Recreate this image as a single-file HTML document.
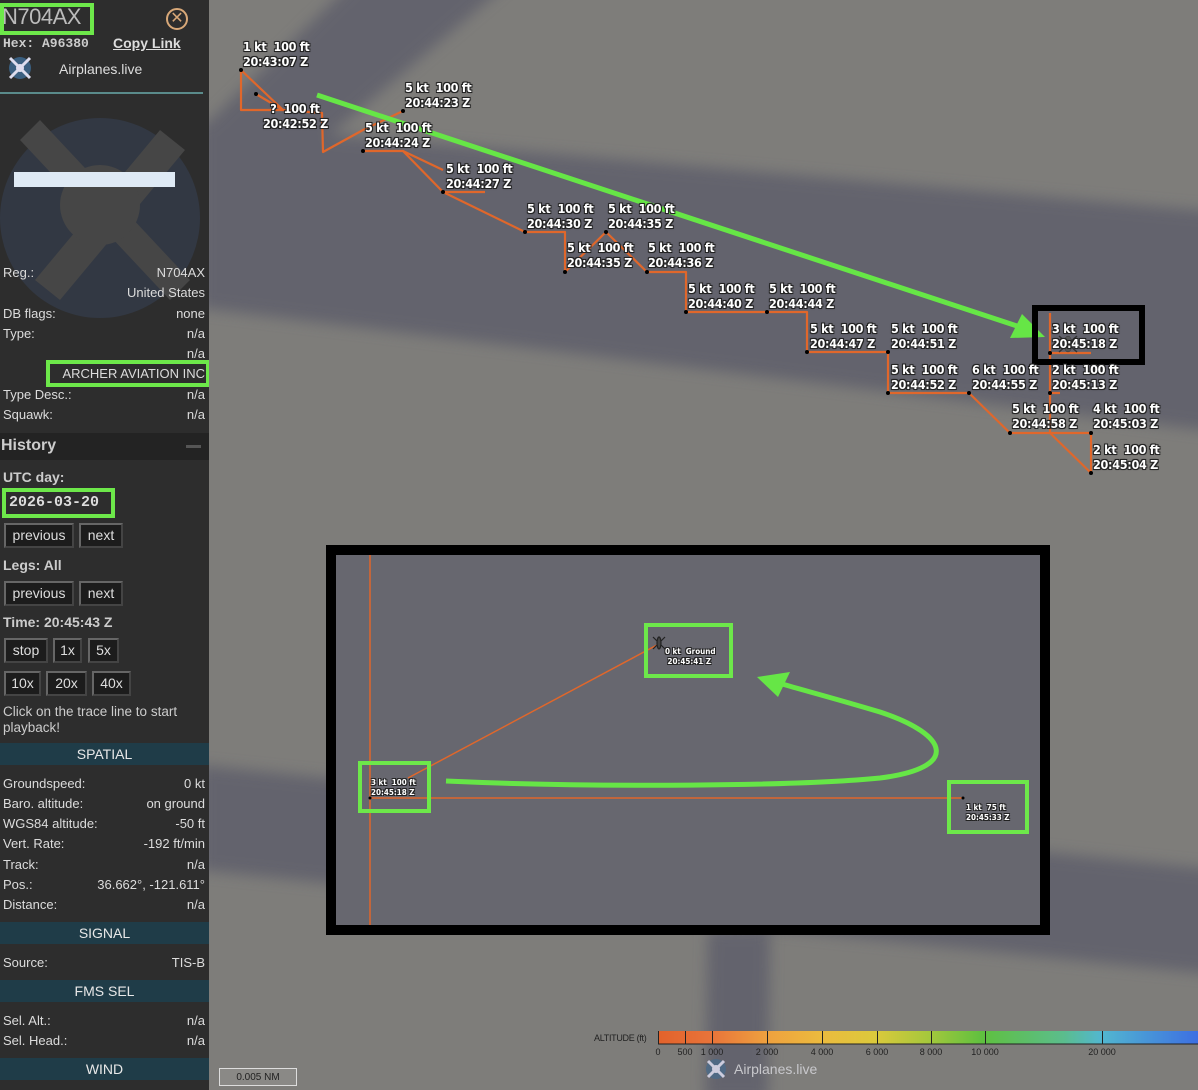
<!DOCTYPE html>
<html><head><meta charset="utf-8">
<style>
*{margin:0;padding:0;box-sizing:border-box}
body{width:1198px;height:1090px;overflow:hidden;position:relative;background:#7e7d7a;font-family:"Liberation Sans",sans-serif}
#sb{position:absolute;left:0;top:0;width:209px;height:1090px;background:#2d2d2d;color:#dcdcdc;font-size:13px;overflow:hidden}
.a{position:absolute;white-space:nowrap}
.r{position:absolute;left:3px;right:4px;height:16px;font-size:13px}
.r span{position:absolute;right:0;top:0}
.hd{position:absolute;left:0;width:209px;height:22px;background:#1f3c48;color:#e8e8e8;font-size:14px;text-align:center;line-height:22px}
.btn{position:absolute;height:25px;background:#1c1c1c;border:2px solid;border-color:#666 #444 #444 #666;color:#ddd;font-size:14px;text-align:center;line-height:21px}
.gb{position:absolute;border:4px solid #6de84a}
.lb{position:absolute;font:bold 12.5px/15px "DejaVu Sans Condensed","Liberation Sans",sans-serif;color:#fff;white-space:nowrap;text-shadow:-1px -1px 0 #222,1px -1px 0 #222,-1px 1px 0 #222,1px 1px 0 #222,0 0 2px #000;letter-spacing:-0.3px}
.sl{position:absolute;font:bold 8px/10px "DejaVu Sans Condensed","Liberation Sans",sans-serif;color:#fff;white-space:nowrap;text-shadow:-1px -1px 0 #222,1px -1px 0 #222,-1px 1px 0 #222,1px 1px 0 #222}
.tk{position:absolute;top:1047px;font-size:9px;color:#222;transform:translateX(-50%);white-space:nowrap}
</style></head><body>
<svg style="position:absolute;left:0;top:0" width="1198" height="1090">
<defs><filter id="bl" x="-10%" y="-10%" width="120%" height="120%"><feGaussianBlur stdDeviation="7"/></filter>
<linearGradient id="g" x1="0" x2="1"><stop offset="0" stop-color="#e3622b"/><stop offset="0.1" stop-color="#e8743a"/><stop offset="0.2" stop-color="#eea03f"/><stop offset="0.3" stop-color="#ecba3e"/><stop offset="0.4" stop-color="#dcc93c"/><stop offset="0.5" stop-color="#a6c83c"/><stop offset="0.6" stop-color="#5fc03f"/><stop offset="0.75" stop-color="#5bbd8c"/><stop offset="0.82" stop-color="#52b7cf"/><stop offset="1" stop-color="#3d6fe2"/></linearGradient></defs>
<g filter="url(#bl)" fill="#63646d">
<polygon points="355,-20 512,-20 330,135 200,155 200,130"/>
<polygon points="200,123 1220,212 1220,432 200,308"/>
<polygon points="200,765 1220,870 1220,975 200,870"/>
<polygon points="708,930 770,930 768,1100 705,1100"/>
</g>
<g fill="none" stroke="#e0672b" stroke-width="2.2" stroke-linejoin="round">
<polyline points="241,70 241,110 283,110 241,70"/>
<polyline points="256,94 283,110 322,113 323,152 363,130 403,111"/>
<polyline points="363,151 403,151 443,192 485,192"/>
<polyline points="403,151 443,170"/>
<polyline points="443,192 525,232 565,232 565,272 606,232 647,272 686,272 686,312 767,312 807,312 807,352 888,352 888,393 969,393 1010,433 1091,433 1091,473 1050,433 1050,313"/>
<polyline points="1050,353 1091,353"/>
<polyline points="1050,393 1060,393"/>
</g>
<g fill="#000">
<circle cx="241" cy="70" r="2"/><circle cx="256" cy="94" r="2"/><circle cx="403" cy="111" r="2"/><circle cx="363" cy="151" r="2"/><circle cx="443" cy="192" r="2"/><circle cx="525" cy="232" r="2"/><circle cx="606" cy="232" r="2"/><circle cx="565" cy="272" r="2"/><circle cx="647" cy="272" r="2"/><circle cx="686" cy="312" r="2"/><circle cx="767" cy="312" r="2"/><circle cx="807" cy="352" r="2"/><circle cx="888" cy="352" r="2"/><circle cx="888" cy="393" r="2"/><circle cx="969" cy="393" r="2"/><circle cx="1050" cy="353" r="2"/><circle cx="1050" cy="393" r="2"/><circle cx="1010" cy="433" r="2"/><circle cx="1091" cy="433" r="2"/><circle cx="1091" cy="473" r="2"/>
</g>
<line x1="317" y1="95" x2="1020" y2="327" stroke="#66e646" stroke-width="5"/>
<polygon points="1045,337 1010,338 1022,314" fill="#66e646"/>
<rect x="1035" y="308" width="107" height="54" fill="none" stroke="#000" stroke-width="6"/>
<g transform="translate(1068,344)" fill="#555" stroke="#333" stroke-width="0.5"><ellipse cx="0" cy="0" rx="4" ry="8"/><line x1="-9" y1="-8" x2="9" y2="8" stroke="#333" stroke-width="1.5"/><line x1="9" y1="-8" x2="-9" y2="8" stroke="#333" stroke-width="1.5"/></g>
<rect x="331" y="550" width="714" height="380" fill="#67676f" stroke="#000" stroke-width="10"/>
<line x1="370" y1="555" x2="370" y2="925" stroke="#e0672b" stroke-width="1.5"/>
<line x1="370" y1="798" x2="963" y2="798" stroke="#e0672b" stroke-width="1.5"/>
<line x1="408" y1="778" x2="657" y2="645" stroke="#e0672b" stroke-width="1.5"/>
<circle cx="370" cy="798" r="1.5" fill="#000"/><circle cx="963" cy="798" r="1.5" fill="#000"/>
<g transform="translate(659,643)" stroke="#222" stroke-width="1.2" fill="#444"><line x1="-6" y1="-6" x2="6" y2="6"/><line x1="6" y1="-6" x2="-6" y2="6"/><ellipse cx="0" cy="0" rx="2" ry="6"/></g>
<path d="M446,781 C600,788 800,786 880,778 C960,768 950,735 880,712 C840,700 810,692 782,684" fill="none" stroke="#66e646" stroke-width="5"/>
<polygon points="757,677 790,672 778,697" fill="#66e646"/>
<rect x="658" y="1031" width="540" height="13" fill="url(#g)"/>
<line x1="658" y1="1044" x2="1198" y2="1044" stroke="#222"/>
<g stroke="#222" stroke-width="1"><line x1="658.5" y1="1031" x2="658.5" y2="1044"/><line x1="685.5" y1="1031" x2="685.5" y2="1044"/><line x1="712.5" y1="1031" x2="712.5" y2="1044"/><line x1="767.5" y1="1031" x2="767.5" y2="1044"/><line x1="822.5" y1="1031" x2="822.5" y2="1044"/><line x1="877.5" y1="1031" x2="877.5" y2="1044"/><line x1="931.5" y1="1031" x2="931.5" y2="1044"/><line x1="985.5" y1="1031" x2="985.5" y2="1044"/><line x1="1102.5" y1="1031" x2="1102.5" y2="1044"/></g>
<g transform="translate(716,1069)"><circle r="10" fill="#4a6a8a" opacity="0.8"/><line x1="-8" y1="-8" x2="8" y2="8" stroke="#ccd" stroke-width="3"/><line x1="8" y1="-8" x2="-8" y2="8" stroke="#ccd" stroke-width="3"/><circle r="4" fill="#ccd"/></g>
</svg>
<div class="gb" style="left:358px;top:761px;width:73px;height:52px"></div>
<div class="gb" style="left:644px;top:623px;width:89px;height:55px"></div>
<div class="gb" style="left:947px;top:780px;width:82px;height:54px"></div>
<div class="sl" style="left:371px;top:778px">3 kt&nbsp; 100 ft<br>20:45:18 Z</div>
<div class="sl" style="left:665px;top:647px">0 kt&nbsp; Ground<br>&nbsp;20:45:41 Z</div>
<div class="sl" style="left:966px;top:803px">1 kt&nbsp; 75 ft<br>20:45:33 Z</div>

<div class="lb" style="left:243px;top:39px">1 kt&nbsp; 100 ft<br>20:43:07 Z</div>
<div class="lb" style="left:263px;top:101px">&nbsp;&nbsp;?&nbsp; 100 ft<br>20:42:52 Z</div>
<div class="lb" style="left:405px;top:80px">5 kt&nbsp; 100 ft<br>20:44:23 Z</div>
<div class="lb" style="left:365px;top:120px">5 kt&nbsp; 100 ft<br>20:44:24 Z</div>
<div class="lb" style="left:446px;top:161px">5 kt&nbsp; 100 ft<br>20:44:27 Z</div>
<div class="lb" style="left:527px;top:201px">5 kt&nbsp; 100 ft<br>20:44:30 Z</div>
<div class="lb" style="left:608px;top:201px">5 kt&nbsp; 100 ft<br>20:44:35 Z</div>
<div class="lb" style="left:567px;top:240px">5 kt&nbsp; 100 ft<br>20:44:35 Z</div>
<div class="lb" style="left:648px;top:240px">5 kt&nbsp; 100 ft<br>20:44:36 Z</div>
<div class="lb" style="left:688px;top:281px">5 kt&nbsp; 100 ft<br>20:44:40 Z</div>
<div class="lb" style="left:769px;top:281px">5 kt&nbsp; 100 ft<br>20:44:44 Z</div>
<div class="lb" style="left:810px;top:321px">5 kt&nbsp; 100 ft<br>20:44:47 Z</div>
<div class="lb" style="left:891px;top:321px">5 kt&nbsp; 100 ft<br>20:44:51 Z</div>
<div class="lb" style="left:1052px;top:321px">3 kt&nbsp; 100 ft<br>20:45:18 Z</div>
<div class="lb" style="left:891px;top:362px">5 kt&nbsp; 100 ft<br>20:44:52 Z</div>
<div class="lb" style="left:972px;top:362px">6 kt&nbsp; 100 ft<br>20:44:55 Z</div>
<div class="lb" style="left:1052px;top:362px">2 kt&nbsp; 100 ft<br>20:45:13 Z</div>
<div class="lb" style="left:1012px;top:401px">5 kt&nbsp; 100 ft<br>20:44:58 Z</div>
<div class="lb" style="left:1093px;top:401px">4 kt&nbsp; 100 ft<br>20:45:03 Z</div>
<div class="lb" style="left:1093px;top:442px">2 kt&nbsp; 100 ft<br>20:45:04 Z</div>

<div class="a" style="left:594px;top:1033px;font-size:9px;color:#222;letter-spacing:-0.3px">ALTITUDE (ft)</div>
<div class="tk" style="left:658px">0</div><div class="tk" style="left:685px">500</div><div class="tk" style="left:712px">1 000</div><div class="tk" style="left:767px">2 000</div><div class="tk" style="left:822px">4 000</div><div class="tk" style="left:877px">6 000</div><div class="tk" style="left:931px">8 000</div><div class="tk" style="left:985px">10 000</div><div class="tk" style="left:1102px">20 000</div>
<div class="a" style="left:734px;top:1061px;font-size:14px;color:#c8c8cc">Airplanes.live</div>
<div class="a" style="left:219px;top:1068px;width:78px;height:18px;border:1px solid #ddd;background:#8a8986;font-size:10px;color:#222;text-align:center;line-height:17px">0.005 NM</div>

<div id="sb">
<div class="a" style="left:2px;top:4px;font-size:22px;color:#bbb;font-weight:300;letter-spacing:-0.5px">N704AX</div>
<div class="gb" style="left:0;top:3px;width:94px;height:32px"></div>
<div class="a" style="left:166px;top:8px;width:22px;height:22px;border:2px solid #d8a878;border-radius:50%;color:#d8a878;font-size:16px;line-height:17px;text-align:center">✕</div>
<div class="a" style="left:3px;top:36px;font:bold 13px 'Liberation Mono',monospace;color:#ccc">Hex: A96380</div>
<div class="a" style="left:113px;top:35px;font-size:14px;font-weight:bold;color:#ddd;text-decoration:underline">Copy Link</div>
<svg class="a" style="left:8px;top:56px" width="26" height="26"><circle cx="12" cy="12" r="11" fill="#3a5f80"/><line x1="2" y1="2" x2="22" y2="22" stroke="#dde" stroke-width="3"/><line x1="22" y1="2" x2="2" y2="22" stroke="#dde" stroke-width="3"/><circle cx="12" cy="12" r="4" fill="#dde"/></svg>
<div class="a" style="left:59px;top:61px;font-size:14px;color:#ddd">Airplanes.live</div>
<div class="a" style="left:0;top:92px;width:203px;height:2px;background:#5a8b8b"></div>
<svg class="a" style="left:0;top:100px" width="209" height="230">
<circle cx="100" cy="118" r="100" fill="#323843"/>
<g fill="#464646"><polygon points="20,40 40,20 190,180 170,200"/><polygon points="160,30 185,50 60,200 35,180"/><circle cx="100" cy="105" r="40"/></g>
</svg>
<div class="a" style="left:14px;top:172px;width:161px;height:15px;background:#dfeaf5"></div>
<div class="r" style="top:265px">Reg.:<span>N704AX</span></div>
<div class="r" style="top:285px"><span>United States</span></div>
<div class="r" style="top:306px">DB flags:<span>none</span></div>
<div class="r" style="top:326px">Type:<span>n/a</span></div>
<div class="r" style="top:346px"><span>n/a</span></div>
<div class="r" style="top:366px;background:#2d2d2d"><span>ARCHER AVIATION INC</span></div>
<div class="gb" style="left:46px;top:360px;width:164px;height:27px"></div>
<div class="r" style="top:387px">Type Desc.:<span>n/a</span></div>
<div class="r" style="top:407px">Squawk:<span>n/a</span></div>
<div class="a" style="left:0;top:433px;width:209px;height:27px;background:#232323"></div>
<div class="a" style="left:1px;top:437px;font-size:16px;font-weight:bold;color:#ccc">History</div>
<div class="a" style="left:186px;top:445px;width:15px;height:3px;background:#555"></div>
<div class="a" style="left:3px;top:469px;font-size:14px;font-weight:bold;color:#ccc">UTC day:</div>
<div class="a" style="left:2px;top:488px;width:113px;height:30px;border:4px solid #6de84a;font:bold 15px/22px 'Liberation Mono',monospace;color:#ddd;padding-left:3px">2026-03-20</div>
<div class="btn" style="left:4px;top:523px;width:70px">previous</div>
<div class="btn" style="left:79px;top:523px;width:44px">next</div>
<div class="a" style="left:3px;top:557px;font-size:14px;font-weight:bold;color:#ccc">Legs: All</div>
<div class="btn" style="left:4px;top:581px;width:70px">previous</div>
<div class="btn" style="left:79px;top:581px;width:44px">next</div>
<div class="a" style="left:3px;top:614px;font-size:14px;font-weight:bold;color:#ccc">Time: 20:45:43 Z</div>
<div class="btn" style="left:4px;top:638px;width:44px">stop</div>
<div class="btn" style="left:53px;top:638px;width:29px">1x</div>
<div class="btn" style="left:88px;top:638px;width:31px">5x</div>
<div class="btn" style="left:4px;top:671px;width:37px">10x</div>
<div class="btn" style="left:46px;top:671px;width:41px">20x</div>
<div class="btn" style="left:92px;top:671px;width:39px">40x</div>
<div class="a" style="left:3px;top:704px;font-size:13.5px;line-height:16px;color:#ccc">Click on the trace line to start<br>playback!</div>
<div class="hd" style="top:743px">SPATIAL</div>
<div class="r" style="top:776px">Groundspeed:<span>0 kt</span></div>
<div class="r" style="top:796px">Baro. altitude:<span>on ground</span></div>
<div class="r" style="top:816px">WGS84 altitude:<span>-50 ft</span></div>
<div class="r" style="top:836px">Vert. Rate:<span>-192 ft/min</span></div>
<div class="r" style="top:857px">Track:<span>n/a</span></div>
<div class="r" style="top:877px">Pos.:<span>36.662°, -121.611°</span></div>
<div class="r" style="top:897px">Distance:<span>n/a</span></div>
<div class="hd" style="top:922px">SIGNAL</div>
<div class="r" style="top:955px">Source:<span>TIS-B</span></div>
<div class="hd" style="top:980px">FMS SEL</div>
<div class="r" style="top:1013px">Sel. Alt.:<span>n/a</span></div>
<div class="r" style="top:1033px">Sel. Head.:<span>n/a</span></div>
<div class="hd" style="top:1058px">WIND</div>
</div>
</body></html>
